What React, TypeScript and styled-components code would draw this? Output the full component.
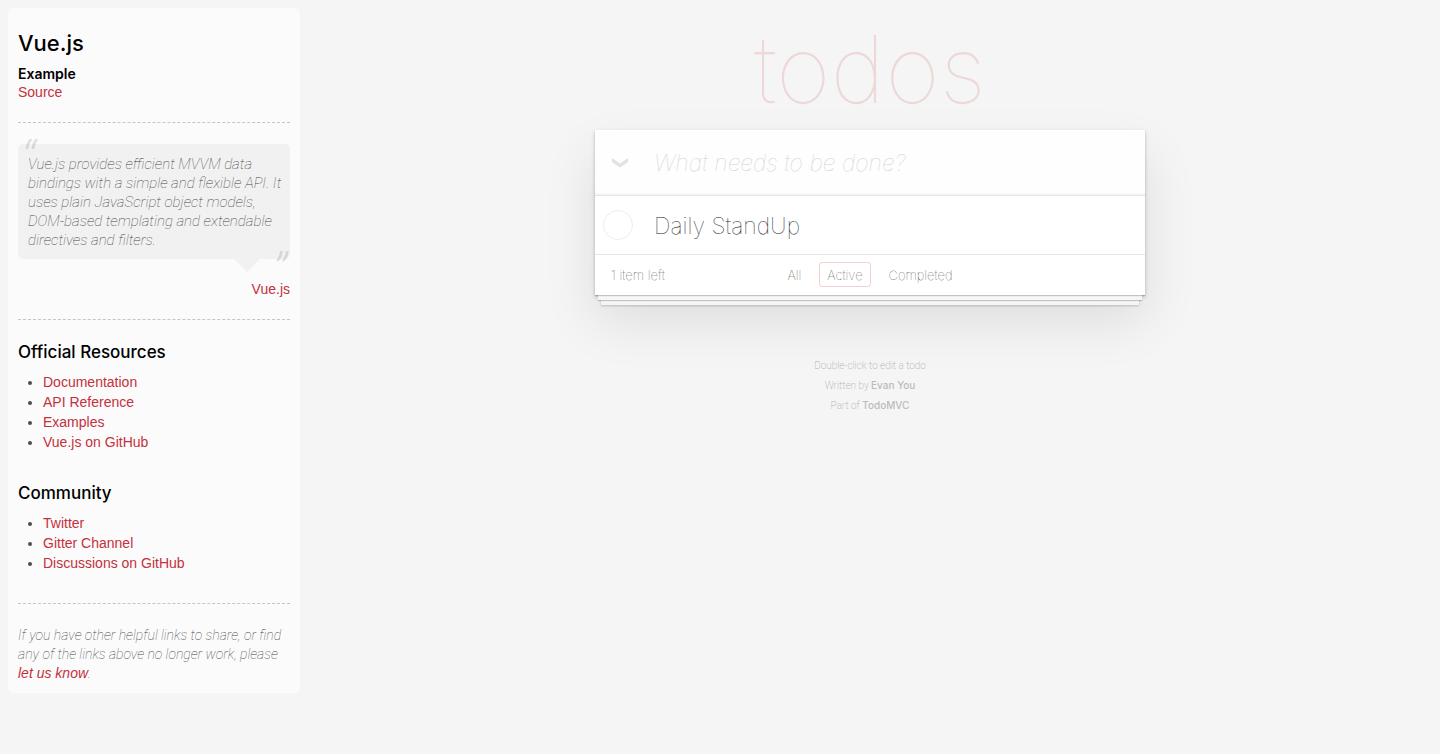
import React, { useState } from 'react';
import styled, { createGlobalStyle } from 'styled-components';

const sans = '"Liberation Sans", Arial, sans-serif';
const thin = 'Roboto, "Liberation Sans", sans-serif';
const display = 'Inter, "Liberation Sans", sans-serif';

const GlobalStyle = createGlobalStyle`
  *, *::before, *::after { box-sizing: border-box; }
  body {
    margin: 0;
    background: #f5f5f5;
    color: #4d4d4d;
    font: 14px/20px ${sans};
    -webkit-font-smoothing: antialiased;
  }
  h1, h2, h3, p, ul, blockquote { margin: 0; padding: 0; }
  button, input { font: inherit; color: inherit; }
`;

const Page = styled.div`
  display: flex;
  align-items: flex-start;
`;

const Sidebar = styled.aside`
  flex: 0 0 292px;
  margin: 8px 0 8px 8px;
  padding: 20px 10px 10px;
  border-radius: 5px;
  background: rgba(255, 255, 255, 0.6);
`;

const SidebarTitle = styled.h2`
  margin-bottom: 7px;
  color: #000;
  font: 500 22px/30px ${display};
`;

const ExampleName = styled.h3`
  color: #000;
  font: 600 14px/18px ${display};
`;

const Link = styled.a`
  color: #c5303c;
  font-weight: 400;
  text-decoration: none;
  &:hover { text-decoration: underline; }
`;

const SourceLine = styled.p`
  padding-bottom: 1px;
  line-height: 18px;
`;

const Divider = styled.hr`
  height: 1px;
  margin: 20px 0 21px;
  border: 0;
  border-top: 1px dashed #c5c5c5;
`;

const Quote = styled.blockquote`
  position: relative;
  padding: 11px 4px 9px 10px;
  border-radius: 5px;
  background: rgba(0, 0, 0, 0.04);
  color: #444;
  font: italic 100 15px/19px ${thin};

  &::after {
    content: '';
    position: absolute;
    top: 100%;
    right: 30px;
    border: 13px solid transparent;
    border-top-color: rgba(0, 0, 0, 0.04);
    border-bottom: 0;
  }
`;

const QuoteMark = styled.span<{ $closing?: boolean }>`
  position: absolute;
  ${p => (p.$closing ? 'right: 3px; bottom: -23px;' : 'left: 3px; top: 5px;')}
  color: rgba(0, 0, 0, 0.11);
  font: italic 300 50px/20px ${thin};
`;

const Attribution = styled.p`
  margin-top: 20px;
  text-align: right;
`;

const ResourceTitle = styled.h3`
  margin-bottom: 9px;
  color: #000;
  font: 500 17px/22px ${display};
`;

const ResourceList = styled.ul`
  margin-bottom: 30px;
  padding-left: 25px;
  list-style: disc;
`;

const Note = styled.p`
  padding-top: 1px;
  color: #444;
  font: italic 100 14px/19px ${thin};
  ${Link} { font: italic 14px/14px ${sans}; }
`;

const Main = styled.main`
  flex: 1;
  min-width: 0;
`;

const TodoApp = styled.section`
  max-width: 550px;
  margin: 0 auto;
`;

const AppTitle = styled.h1`
  padding-top: 8px;
  color: rgba(195, 47, 47, 0.15);
  font: 100 94px/122px ${display};
  text-align: center;
`;

const Card = styled.div`
  background: #fff;
  box-shadow:
    0 1px 1px rgba(0, 0, 0, 0.2),
    0 8px 0 -3px #f6f6f6,
    0 9px 1px -3px rgba(0, 0, 0, 0.2),
    0 16px 0 -6px #f6f6f6,
    0 17px 2px -6px rgba(0, 0, 0, 0.2),
    0 2px 4px rgba(0, 0, 0, 0.2),
    0 25px 50px rgba(0, 0, 0, 0.1);
`;

const EntryRow = styled.div`
  display: flex;
  height: 65px;
  background: rgba(0, 0, 0, 0.003);
  box-shadow: inset 0 -2px 1px rgba(0, 0, 0, 0.03);
`;

const ToggleAll = styled.button`
  display: flex;
  align-items: center;
  justify-content: center;
  width: 50px;
  padding: 0;
  border: 0;
  background: none;
  color: #e2e2e2;
`;

const EntryInput = styled.input`
  flex: 1;
  min-width: 0;
  padding: 0 9px;
  border: 0;
  outline: 0;
  background: none;
  font: 100 23px/30px ${display};
  &::placeholder { color: #d2d2d2; font-style: italic; opacity: 1; }
`;

const TodoItem = styled.li`
  display: flex;
  align-items: center;
  gap: 21px;
  height: 59px;
  padding-left: 8px;
  border-top: 1px solid #e6e6e6;
`;

const TodoList = styled.ul`
  list-style: none;
`;

const Check = styled.input`
  appearance: none;
  width: 30px;
  height: 30px;
  margin: 0;
  border: 1px solid #ededed;
  border-radius: 50%;
  &:checked { border-color: #bddad5; background: #bddad5; }
`;

const TodoLabel = styled.label`
  padding-top: 2px;
  color: #222;
  font: 100 23px/30px ${display};
`;

const CardFooter = styled.footer`
  display: grid;
  grid-template-columns: 1fr auto 1fr;
  align-items: center;
  height: 41px;
  padding: 0 16px 1px;
  border-top: 1px solid #e6e6e6;
  color: #333;
  font: 100 13px/17px ${display};
`;

const ItemCount = styled.span`
  padding-top: 2px;
`;

const Filters = styled.ul`
  display: flex;
  gap: 10px;
  list-style: none;
`;

const FilterLink = styled.a<{ $selected: boolean }>`
  display: block;
  padding: 4px 7px 2px;
  border: 1px solid ${p => (p.$selected ? 'rgba(205, 47, 47, 0.22)' : 'transparent')};
  border-radius: 3px;
  color: inherit;
  text-decoration: none;
`;

const Info = styled.footer`
  margin-top: 61px;
  color: #b0b0b0;
  font: 200 10px/20px ${thin};
  text-align: center;
`;

const InfoLink = styled.a`
  color: #bbb;
  font: 500 10px/10px ${display};
  text-decoration: none;
`;

const official = ['Documentation', 'API Reference', 'Examples', 'Vue.js on GitHub'];
const community = ['Twitter', 'Gitter Channel', 'Discussions on GitHub'];
const filters = ['All', 'Active', 'Completed'];

function Resources({ title, links }: { title: string; links: string[] }) {
  return (
    <section>
      <ResourceTitle>{title}</ResourceTitle>
      <ResourceList>
        {links.map(name => (
          <li key={name}><Link href="#">{name}</Link></li>
        ))}
      </ResourceList>
    </section>
  );
}

export default function App() {
  const [filter, setFilter] = useState('Active');
  const [draft, setDraft] = useState('');
  return (
    <>
      <GlobalStyle />
      <Page>
        <Sidebar>
          <SidebarTitle>Vue.js</SidebarTitle>
          <ExampleName>Example</ExampleName>
          <SourceLine><Link href="#">Source</Link></SourceLine>
          <Divider />
          <Quote>
            <QuoteMark aria-hidden="true">“</QuoteMark>
            <p>
              Vue.js provides efficient MVVM data bindings with a simple and flexible API. It uses
              plain JavaScript object models, DOM-based templating and extendable directives and
              filters.
            </p>
            <QuoteMark $closing aria-hidden="true">”</QuoteMark>
          </Quote>
          <Attribution><Link href="#">Vue.js</Link></Attribution>
          <Divider />
          <Resources title="Official Resources" links={official} />
          <Resources title="Community" links={community} />
          <Divider />
          <Note>
            If you have other helpful links to share, or find any of the links above no longer work,
            please <Link href="#">let us know</Link>.
          </Note>
        </Sidebar>
        <Main>
          <TodoApp>
            <AppTitle>todos</AppTitle>
            <Card>
              <EntryRow>
                <ToggleAll type="button" aria-label="Mark all as complete">
                  <svg width="16" height="10" viewBox="0 0 16 10" fill="currentColor">
                    <path d="M0 0 8 5.4 16 0V4L8 9.6 0 4Z" />
                  </svg>
                </ToggleAll>
                <EntryInput
                  aria-label="New todo"
                  placeholder="What needs to be done?"
                  value={draft}
                  onChange={e => setDraft(e.target.value)}
                />
              </EntryRow>
              <TodoList>
                <TodoItem>
                  <Check type="checkbox" id="todo-1" />
                  <TodoLabel htmlFor="todo-1">Daily StandUp</TodoLabel>
                </TodoItem>
              </TodoList>
              <CardFooter>
                <ItemCount>1 item left</ItemCount>
                <Filters>
                  {filters.map(name => (
                    <li key={name}>
                      <FilterLink href="#" $selected={name === filter} onClick={() => setFilter(name)}>
                        {name}
                      </FilterLink>
                    </li>
                  ))}
                </Filters>
              </CardFooter>
            </Card>
            <Info>
              <p>Double-click to edit a todo</p>
              <p>Written by <InfoLink href="#">Evan You</InfoLink></p>
              <p>Part of <InfoLink href="#">TodoMVC</InfoLink></p>
            </Info>
          </TodoApp>
        </Main>
      </Page>
    </>
  );
}
